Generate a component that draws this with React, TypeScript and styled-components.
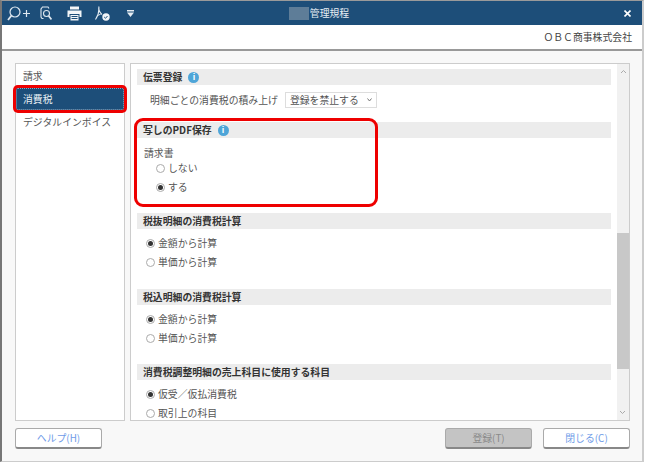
import React from 'react';
import styled, { createGlobalStyle } from 'styled-components';

const Global = createGlobalStyle`
  html, body {
    margin: 0;
    padding: 0;
    background: #fff;
  }
  body {
    font-family: "Noto Sans CJK JP", "Liberation Sans", sans-serif;
    font-size: 9.85px;
    color: #555;
  }
`;

const Window = styled.div`
  width: 644px;
  height: 462px;
  box-sizing: border-box;
  display: flex;
  flex-direction: column;
  overflow: hidden;
  background: #f8f8f8;
  border-top: 1px solid #9a9a9a;
  border-left: 2px solid #777;
  border-right: 2px solid #ccc;
  border-bottom: 1px solid #ccc;
`;

const TitleBar = styled.div`
  height: 24px;
  margin-left: -2px;
  margin-right: -2px;
  padding: 0 13px 0 7px;
  flex-shrink: 0;
  display: grid;
  grid-template-columns: 1fr auto 1fr;
  align-items: center;
  background: #1d4e79;
  color: #fff;
`;

const ToolGroup = styled.div`
  display: flex;
  align-items: center;
`;

const ToolSlot = styled.span<{ $gap?: number }>`
  display: flex;
  margin-right: ${p => p.$gap ?? 0}px;
`;

const Title = styled.div`
  display: flex;
  align-items: center;
  color: #e6edf3;
`;

const TitleMask = styled.span`
  width: 20px;
  height: 13px;
  margin-right: 1px;
  background: #5e7d98;
`;

const CloseButton = styled.div`
  justify-self: end;
  display: flex;
`;

const CompanyBar = styled.div`
  height: 26px;
  box-sizing: border-box;
  padding-right: 10px;
  flex-shrink: 0;
  display: flex;
  align-items: center;
  justify-content: flex-end;
  background: #fff;
  border-bottom: 2px solid #999;
  color: #444;
`;

const Body = styled.div`
  padding: 12px 12px 0 13px;
  flex-shrink: 0;
  display: flex;
  gap: 5px;
`;

const SideList = styled.ul`
  width: 110px;
  height: 358px;
  box-sizing: border-box;
  margin: 0;
  padding: 0;
  list-style: none;
  background: #fff;
  border: 1px solid #ccc;
`;

const SideItem = styled.li<{ $active?: boolean }>`
  height: ${p => (p.$active ? 22 : 24)}px;
  padding-left: ${p => (p.$active ? 6 : 7)}px;
  display: flex;
  align-items: center;
  position: relative;
  box-sizing: border-box;
  color: ${p => (p.$active ? '#e8eef4' : '#555')};
  background: ${p => (p.$active ? '#1d4e79' : 'transparent')};
  box-shadow: ${p => (p.$active ? '0 0 0 3px #ee0000' : 'none')};
  border-radius: ${p => (p.$active ? '2px' : '0')};
  border: ${p => (p.$active ? '1px dotted #8aa5bd' : 'none')};
`;

const ContentPanel = styled.div`
  width: 500px;
  height: 358px;
  box-sizing: border-box;
  display: flex;
  background: #fff;
  border: 1px solid #ccc;
`;

const Scroller = styled.div`
  flex: 1;
  min-width: 0;
  padding: 5px 6px 0;
  overflow: hidden;
`;

const Section = styled.section<{ $height: number }>`
  position: relative;
  height: ${p => p.$height}px;
`;

const SectionHead = styled.h3`
  height: 16px;
  margin: 0;
  padding-left: 6px;
  display: flex;
  align-items: center;
  gap: 6px;
  background: #ececec;
  font-size: 9.85px;
  font-weight: 700;
  color: #333;
`;

const InfoIcon = styled.span`
  width: 11px;
  height: 11px;
  border-radius: 50%;
  display: inline-flex;
  align-items: center;
  justify-content: center;
  background: #4ea5d8;
  color: #fff;
  font-family: "Liberation Sans", sans-serif;
  font-size: 9px;
  font-weight: 700;
  line-height: 1;
`;

const SelectRow = styled.div`
  margin-top: 7px;
  padding-left: 13px;
  display: flex;
  align-items: center;
  gap: 7px;
`;

const SelectBox = styled.div`
  width: 92px;
  height: 16px;
  box-sizing: border-box;
  padding: 0 4px;
  display: flex;
  align-items: center;
  justify-content: space-between;
  background: #fff;
  border: 1px solid #ddd;
`;

const FieldLabel = styled.div`
  margin-top: 7px;
  padding-left: 7px;
  line-height: 16px;
`;

const RadioGroup = styled.div<{ $indent: number; $top: number }>`
  margin-top: ${p => p.$top}px;
  padding-left: ${p => p.$indent}px;
  display: flex;
  flex-direction: column;
  gap: 5px;
`;

const RadioRow = styled.label`
  height: 14px;
  display: flex;
  align-items: center;
  gap: 3px;
  color: #555;
`;

const RadioMark = styled.span<{ $on?: boolean }>`
  width: 9px;
  height: 9px;
  box-sizing: border-box;
  border-radius: 50%;
  border: 1px solid #aaa;
  background: #fff;
  display: flex;
  align-items: center;
  justify-content: center;

  &::after {
    content: '';
    width: 5px;
    height: 5px;
    border-radius: 50%;
    background: ${p => (p.$on ? '#333' : 'transparent')};
  }
`;

const Highlight = styled.div`
  position: absolute;
  left: -3px;
  top: -4px;
  width: 244px;
  height: 89px;
  box-sizing: border-box;
  border: 3px solid #ee0000;
  border-radius: 9px;
`;

const ScrollTrack = styled.div`
  width: 12px;
  flex-shrink: 0;
  display: flex;
  flex-direction: column;
  justify-content: space-between;
  background: #f1f1f1;
  position: relative;
`;

const ScrollArrow = styled.div<{ $down?: boolean }>`
  height: 14px;
  display: flex;
  align-items: center;
  justify-content: center;
  transform: ${p => (p.$down ? 'rotate(180deg)' : 'none')};
`;

const ScrollThumb = styled.div`
  position: absolute;
  left: 0;
  right: 0;
  top: 169px;
  height: 136px;
  background: #c8c8c8;
`;

const Footer = styled.div`
  padding: 7px 12px 0 13px;
  flex-shrink: 0;
  display: flex;
  justify-content: space-between;
`;

const FooterRight = styled.div`
  display: flex;
  gap: 11px;
`;

const Button = styled.div<{ $disabled?: boolean }>`
  width: 87px;
  height: 21px;
  box-sizing: border-box;
  display: flex;
  align-items: center;
  justify-content: center;
  border: 1px solid #aaa;
  border-bottom: 2px solid #888;
  border-radius: 3px;
  background: ${p => (p.$disabled ? '#c4c4c4' : '#fff')};
  color: ${p => (p.$disabled ? '#8a8a8a' : '#6f9be8')};
`;

const ZoomIcon = () => (
  <svg width="23" height="15" viewBox="0 0 23 15" fill="none" stroke="#dfe8f0" strokeWidth="1.2">
    <circle cx="8" cy="6" r="5" />
    <path d="M4.5 9.5L1 14" strokeWidth="1.8" />
    <path d="M16 7.5h7M19.5 4v7" />
  </svg>
);

const PageSearchIcon = () => (
  <svg width="12" height="15" viewBox="0 0 12 15" fill="none" stroke="#dfe8f0" strokeWidth="1.1">
    <path d="M7 1H2.5L1 3v8l1 1.5h1.5" />
    <path d="M7 1h1l1 1.5" />
    <circle cx="6.5" cy="7.5" r="3" />
    <path d="M8.7 10l2.8 3.5" strokeWidth="1.8" />
  </svg>
);

const PrintIcon = () => (
  <svg width="15" height="15" viewBox="0 0 15 15">
    <path d="M3 0.5h9v3H3z" fill="#f2f5f8" />
    <path d="M0.5 4.5h14v6.5h-2V8h-10v3h-2z" fill="#f2f5f8" />
    <path d="M3.5 9h8v5.5h-8z" fill="#f2f5f8" />
    <path d="M4.5 10.5h6M4.5 12.5h6" stroke="#1d4e79" />
  </svg>
);

const PdfCheckIcon = () => (
  <svg width="15" height="15" viewBox="0 0 15 15" fill="none">
    <path d="M4 0.5c-1 3 1 6.5 3 8M4 2.5C4 7 2.5 10.5 0.5 13.5" stroke="#e6edf3" strokeWidth="1.1" />
    <path d="M5.5 8.5c-1 0-2 0.4-3 1.2" stroke="#e6edf3" />
    <circle cx="11" cy="11" r="3.7" fill="#f2f5f8" />
    <path d="M9.2 11l1.3 1.3 2-2.3" stroke="#1d4e79" />
  </svg>
);

const MenuDownIcon = () => (
  <svg width="7" height="7" viewBox="0 0 7 7">
    <path d="M0 0h7v1.5H0z" fill="#e6edf3" />
    <path d="M0 2.5h7L3.5 7z" fill="#e6edf3" />
  </svg>
);

const CloseIcon = () => (
  <svg width="7" height="7" viewBox="0 0 7 7" stroke="#fff" strokeWidth="1.6">
    <path d="M0.5 0.5l6 6M6.5 0.5l-6 6" />
  </svg>
);

const Chevron = () => (
  <svg width="7" height="5" viewBox="0 0 7 5" fill="none" stroke="#aaa">
    <path d="M1 4l2.5-2.5L6 4" />
  </svg>
);

const SelectChevron = () => (
  <svg width="5" height="4" viewBox="0 0 5 4" fill="none" stroke="#777">
    <path d="M0.5 0.5L2.5 3l2-2.5" />
  </svg>
);

interface RadioItem {
  label: string;
  on?: boolean;
}

const Radios: React.FC<{ items: RadioItem[]; indent?: number; top?: number }> = ({
  items,
  indent = 9,
  top = 7,
}) => (
  <RadioGroup $indent={indent} $top={top}>
    {items.map(({ label, on }) => (
      <RadioRow key={label}>
        <RadioMark $on={on} />
        {label}
      </RadioRow>
    ))}
  </RadioGroup>
);

const App: React.FC = () => (
  <>
    <Global />
    <Window>
      <TitleBar>
        <ToolGroup>
          <ToolSlot $gap={10}><ZoomIcon /></ToolSlot>
          <ToolSlot $gap={15}><PageSearchIcon /></ToolSlot>
          <ToolSlot $gap={13}><PrintIcon /></ToolSlot>
          <ToolSlot $gap={17}><PdfCheckIcon /></ToolSlot>
          <ToolSlot><MenuDownIcon /></ToolSlot>
        </ToolGroup>
        <Title>
          <TitleMask />
          管理規程
        </Title>
        <CloseButton>
          <CloseIcon />
        </CloseButton>
      </TitleBar>
      <CompanyBar>ＯＢＣ商事株式会社</CompanyBar>
      <Body>
        <SideList>
          <SideItem>請求</SideItem>
          <SideItem $active>消費税</SideItem>
          <SideItem>デジタルインボイス</SideItem>
        </SideList>
        <ContentPanel>
          <Scroller>
            <Section $height={53}>
              <SectionHead>
                伝票登録
                <InfoIcon>i</InfoIcon>
              </SectionHead>
              <SelectRow>
                明細ごとの消費税の積み上げ
                <SelectBox>
                  登録を禁止する
                  <SelectChevron />
                </SelectBox>
              </SelectRow>
            </Section>
            <Section $height={91}>
              <SectionHead>
                写しのPDF保存
                <InfoIcon>i</InfoIcon>
              </SectionHead>
              <FieldLabel>請求書</FieldLabel>
              <Radios indent={19} top={0} items={[{ label: 'しない' }, { label: 'する', on: true }]} />
              <Highlight />
            </Section>
            <Section $height={76}>
              <SectionHead>税抜明細の消費税計算</SectionHead>
              <Radios items={[{ label: '金額から計算', on: true }, { label: '単価から計算' }]} />
            </Section>
            <Section $height={75}>
              <SectionHead>税込明細の消費税計算</SectionHead>
              <Radios items={[{ label: '金額から計算', on: true }, { label: '単価から計算' }]} />
            </Section>
            <Section $height={56}>
              <SectionHead>消費税調整明細の売上科目に使用する科目</SectionHead>
              <Radios items={[{ label: '仮受／仮払消費税', on: true }, { label: '取引上の科目' }]} />
            </Section>
          </Scroller>
          <ScrollTrack>
            <ScrollArrow>
              <Chevron />
            </ScrollArrow>
            <ScrollThumb />
            <ScrollArrow $down>
              <Chevron />
            </ScrollArrow>
          </ScrollTrack>
        </ContentPanel>
      </Body>
      <Footer>
        <Button>ヘルプ(H)</Button>
        <FooterRight>
          <Button $disabled>登録(T)</Button>
          <Button>閉じる(C)</Button>
        </FooterRight>
      </Footer>
    </Window>
  </>
);

export default App;
